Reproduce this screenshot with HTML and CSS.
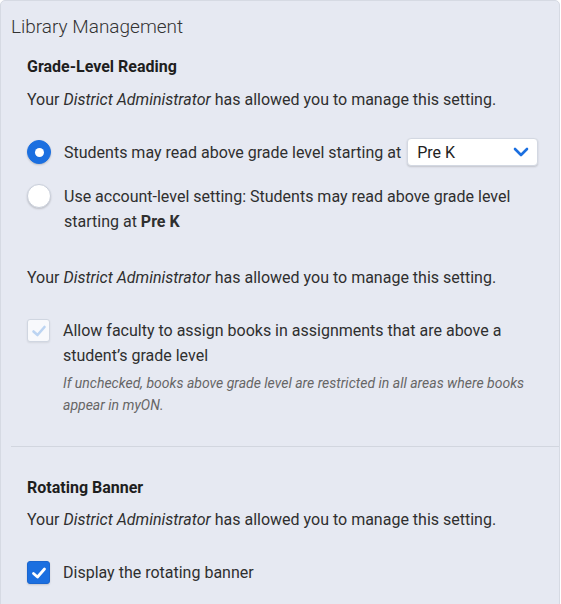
FILE: index.html
```html
<!DOCTYPE html>
<html>
<head>
<meta charset="utf-8">
<link rel="stylesheet" href="styles.css">
</head>
<body>
<div class="panel">
  <h1 class="title">Library Management</h1>
  <section class="section">
    <h2 class="heading">Grade-Level Reading</h2>
    <p class="note">Your <em>District Administrator</em> has allowed you to manage this setting.</p>
    <div class="options">
      <div class="option option-select">
        <span class="radio radio-on"></span>
        <span class="label">Students may read above grade level starting at</span>
        <div class="select">
          <span>Pre K</span>
          <svg class="chev" width="16" height="10" viewBox="0 0 16 10"><path d="M2 2 L8 8 L14 2" fill="none" stroke="#1b6fe0" stroke-width="2.6" stroke-linecap="round" stroke-linejoin="round"/></svg>
        </div>
      </div>
      <div class="option">
        <span class="radio"></span>
        <span class="label">Use account-level setting: Students may read above grade level starting at <b>Pre K</b></span>
      </div>
    </div>
    <p class="note note-2">Your <em>District Administrator</em> has allowed you to manage this setting.</p>
    <div class="check-row">
      <span class="checkbox checkbox-disabled">
        <svg width="16" height="16" viewBox="0 0 16 16"><path d="M2.5 8.5 L6.5 12 L13.5 4" fill="none" stroke="#bcd4f2" stroke-width="2.6" stroke-linecap="round" stroke-linejoin="round"/></svg>
      </span>
      <div class="check-text">
        <div class="label">Allow faculty to assign books in assignments that are above a student’s grade level</div>
        <div class="hint">If unchecked, books above grade level are restricted in all areas where books appear in myON.</div>
      </div>
    </div>
  </section>
  <hr class="divider">
  <section class="section section-2">
    <h2 class="heading">Rotating Banner</h2>
    <p class="note">Your <em>District Administrator</em> has allowed you to manage this setting.</p>
    <div class="check-row check-row-2">
      <span class="checkbox checkbox-on">
        <svg width="16" height="16" viewBox="0 0 16 16"><path d="M2.5 8.5 L6.5 12 L13.5 4" fill="none" stroke="#ffffff" stroke-width="2.8" stroke-linecap="round" stroke-linejoin="round"/></svg>
      </span>
      <div class="check-text">
        <div class="label">Display the rotating banner</div>
      </div>
    </div>
  </section>
</div>
</body>
</html>
```
FILE: styles.css
```css
html, body {
  margin: 0;
  padding: 0;
  background: #ffffff;
}
body {
  font-family: Roboto, "Liberation Sans", sans-serif;
  color: #2b2b2b;
}
.panel {
  width: 560px;
  height: 620px;
  background: #e6e9f2;
  border: 1px solid #d6dae3;
  border-radius: 5px;
  box-sizing: border-box;
  overflow: hidden;
}
.title {
  margin: 0;
  padding: 14px 0 0 10px;
  font-size: 19px;
  font-weight: 300;
  line-height: 24px;
  color: #333;
}
.section {
  padding: 0 0 0 26px;
}
.heading {
  margin: 18px 0 0 0;
  font-size: 16px;
  font-weight: 700;
  line-height: 20px;
  color: #1e1e1e;
}
.note {
  margin: 13px 0 0 0;
  font-size: 16px;
  line-height: 20px;
  color: #2f2f2f;
}
.note em { font-style: italic; }
.note-2 { margin-top: 34px; }
.options {
  margin-top: 28px;
  display: flex;
  flex-direction: column;
  gap: 18px;
}
.option {
  display: flex;
  align-items: flex-start;
  gap: 13px;
}
.option-select {
  align-items: center;
}
.option .label {
  font-size: 16px;
  line-height: 25px;
  color: #2f2f2f;
  max-width: 460px;
}
.radio {
  flex: none;
  width: 24px;
  height: 24px;
  border-radius: 50%;
  box-sizing: border-box;
  background: #fff;
  border: 1px solid #c9cfdb;
  box-shadow: 0 1px 2px rgba(0,0,0,0.18);
  position: relative;
}
.radio-on {
  background: #1b6fe0;
  border-color: #1b6fe0;
}
.radio-on::after {
  content: "";
  position: absolute;
  left: 50%;
  top: 50%;
  width: 9px;
  height: 9px;
  margin: -4.5px 0 0 -4.5px;
  border-radius: 50%;
  background: #fff;
}
.option-select .label { max-width: none; }
.select {
  margin-left: -7px;
  width: 131px;
  height: 28px;
  box-sizing: border-box;
  background: #fff;
  border: 1px solid #d3d8e2;
  border-radius: 4px;
  box-shadow: 0 1px 2px rgba(0,0,0,0.16);
  display: flex;
  align-items: center;
  justify-content: space-between;
  padding: 0 8px 0 9px;
  font-size: 16px;
  color: #222;
}
.chev { display: block; }
.check-row {
  margin-top: 30px;
  display: flex;
  align-items: flex-start;
  gap: 13px;
}
.checkbox {
  flex: none;
  width: 23px;
  height: 23px;
  box-sizing: border-box;
  border-radius: 3px;
  display: flex;
  align-items: center;
  justify-content: center;
  margin-top: 1px;
}
.checkbox-disabled {
  background: #f8f9fc;
  border: 1px solid #d0d6e1;
  box-shadow: 0 1px 2px rgba(0,0,0,0.08);
}
.checkbox-on {
  background: #1b6fe0;
  border: 1px solid #1a66cf;
  box-shadow: 0 1px 2px rgba(0,0,0,0.15);
}
.check-text .label {
  font-size: 16px;
  line-height: 25px;
  color: #2f2f2f;
  max-width: 460px;
}
.hint {
  margin-top: 4px;
  font-size: 14px;
  font-style: italic;
  line-height: 22px;
  color: #666;
  max-width: 470px;
}
.divider {
  margin: 30px 0 0 10px;
  border: 0;
  border-top: 1px solid #d2d6df;
  height: 0;
}
.section-2 .heading { margin-top: 31px; }
.section-2 .note { margin-top: 12px; }
.check-row-2 {
  margin-top: 30px;
  align-items: center;
}
.check-row-2 .checkbox { margin-top: 0; }
```
